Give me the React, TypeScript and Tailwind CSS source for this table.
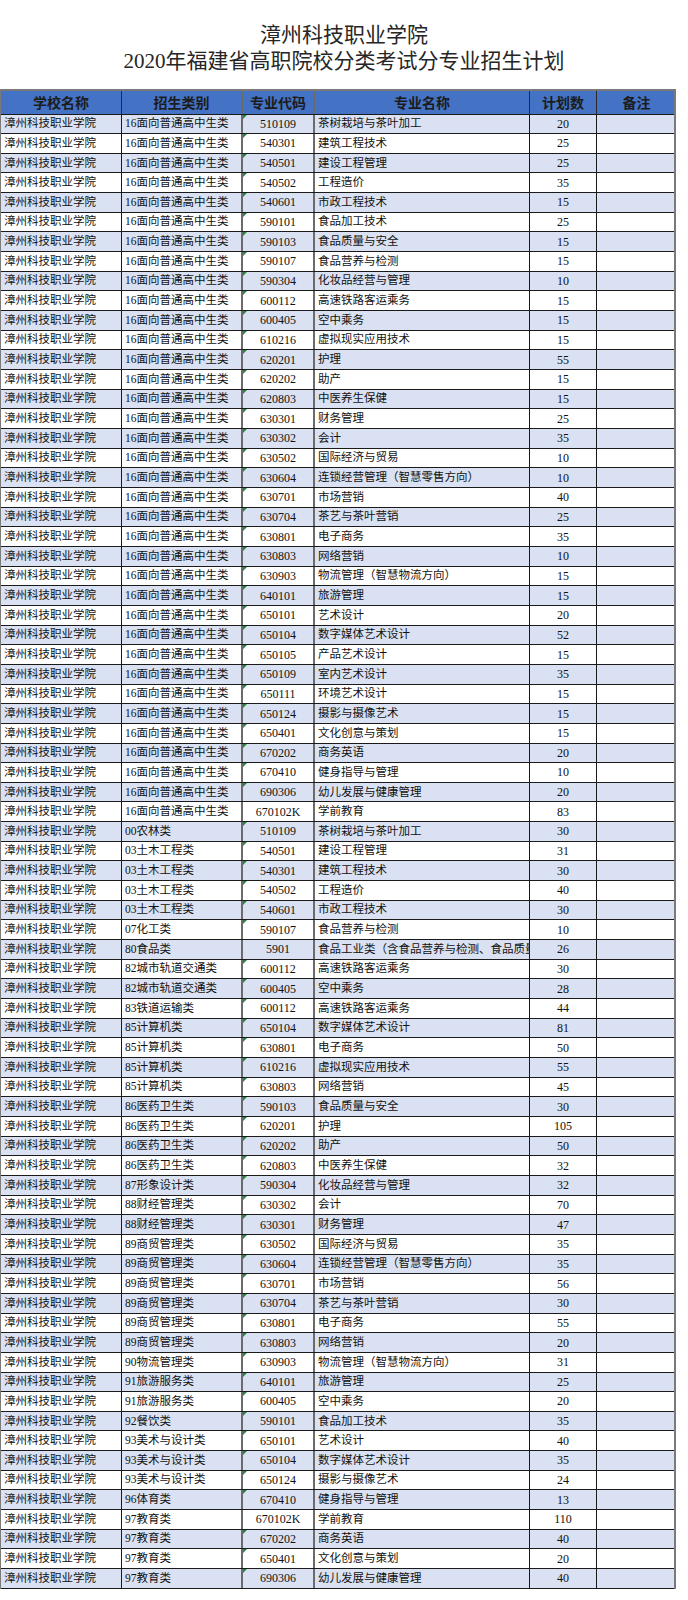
const rows: [string, string, string, number][] = [
  ["16面向普通高中生类", "510109", "茶树栽培与茶叶加工", 20],
  ["16面向普通高中生类", "540301", "建筑工程技术", 25],
  ["16面向普通高中生类", "540501", "建设工程管理", 25],
  ["16面向普通高中生类", "540502", "工程造价", 35],
  ["16面向普通高中生类", "540601", "市政工程技术", 15],
  ["16面向普通高中生类", "590101", "食品加工技术", 25],
  ["16面向普通高中生类", "590103", "食品质量与安全", 15],
  ["16面向普通高中生类", "590107", "食品营养与检测", 15],
  ["16面向普通高中生类", "590304", "化妆品经营与管理", 10],
  ["16面向普通高中生类", "600112", "高速铁路客运乘务", 15],
  ["16面向普通高中生类", "600405", "空中乘务", 15],
  ["16面向普通高中生类", "610216", "虚拟现实应用技术", 15],
  ["16面向普通高中生类", "620201", "护理", 55],
  ["16面向普通高中生类", "620202", "助产", 15],
  ["16面向普通高中生类", "620803", "中医养生保健", 15],
  ["16面向普通高中生类", "630301", "财务管理", 25],
  ["16面向普通高中生类", "630302", "会计", 35],
  ["16面向普通高中生类", "630502", "国际经济与贸易", 10],
  ["16面向普通高中生类", "630604", "连锁经营管理（智慧零售方向）", 10],
  ["16面向普通高中生类", "630701", "市场营销", 40],
  ["16面向普通高中生类", "630704", "茶艺与茶叶营销", 25],
  ["16面向普通高中生类", "630801", "电子商务", 35],
  ["16面向普通高中生类", "630803", "网络营销", 10],
  ["16面向普通高中生类", "630903", "物流管理（智慧物流方向）", 15],
  ["16面向普通高中生类", "640101", "旅游管理", 15],
  ["16面向普通高中生类", "650101", "艺术设计", 20],
  ["16面向普通高中生类", "650104", "数字媒体艺术设计", 52],
  ["16面向普通高中生类", "650105", "产品艺术设计", 15],
  ["16面向普通高中生类", "650109", "室内艺术设计", 35],
  ["16面向普通高中生类", "650111", "环境艺术设计", 15],
  ["16面向普通高中生类", "650124", "摄影与摄像艺术", 15],
  ["16面向普通高中生类", "650401", "文化创意与策划", 15],
  ["16面向普通高中生类", "670202", "商务英语", 20],
  ["16面向普通高中生类", "670410", "健身指导与管理", 10],
  ["16面向普通高中生类", "690306", "幼儿发展与健康管理", 20],
  ["16面向普通高中生类", "670102K", "学前教育", 83],
  ["00农林类", "510109", "茶树栽培与茶叶加工", 30],
  ["03土木工程类", "540501", "建设工程管理", 31],
  ["03土木工程类", "540301", "建筑工程技术", 30],
  ["03土木工程类", "540502", "工程造价", 40],
  ["03土木工程类", "540601", "市政工程技术", 30],
  ["07化工类", "590107", "食品营养与检测", 10],
  ["80食品类", "5901", "食品工业类（含食品营养与检测、食品质量与安全）", 26],
  ["82城市轨道交通类", "600112", "高速铁路客运乘务", 30],
  ["82城市轨道交通类", "600405", "空中乘务", 28],
  ["83铁道运输类", "600112", "高速铁路客运乘务", 44],
  ["85计算机类", "650104", "数字媒体艺术设计", 81],
  ["85计算机类", "630801", "电子商务", 50],
  ["85计算机类", "610216", "虚拟现实应用技术", 55],
  ["85计算机类", "630803", "网络营销", 45],
  ["86医药卫生类", "590103", "食品质量与安全", 30],
  ["86医药卫生类", "620201", "护理", 105],
  ["86医药卫生类", "620202", "助产", 50],
  ["86医药卫生类", "620803", "中医养生保健", 32],
  ["87形象设计类", "590304", "化妆品经营与管理", 32],
  ["88财经管理类", "630302", "会计", 70],
  ["88财经管理类", "630301", "财务管理", 47],
  ["89商贸管理类", "630502", "国际经济与贸易", 35],
  ["89商贸管理类", "630604", "连锁经营管理（智慧零售方向）", 35],
  ["89商贸管理类", "630701", "市场营销", 56],
  ["89商贸管理类", "630704", "茶艺与茶叶营销", 30],
  ["89商贸管理类", "630801", "电子商务", 55],
  ["89商贸管理类", "630803", "网络营销", 20],
  ["90物流管理类", "630903", "物流管理（智慧物流方向）", 31],
  ["91旅游服务类", "640101", "旅游管理", 25],
  ["91旅游服务类", "600405", "空中乘务", 20],
  ["92餐饮类", "590101", "食品加工技术", 35],
  ["93美术与设计类", "650101", "艺术设计", 40],
  ["93美术与设计类", "650104", "数字媒体艺术设计", 35],
  ["93美术与设计类", "650124", "摄影与摄像艺术", 24],
  ["96体育类", "670410", "健身指导与管理", 13],
  ["97教育类", "670102K", "学前教育", 110],
  ["97教育类", "670202", "商务英语", 40],
  ["97教育类", "650401", "文化创意与策划", 20],
  ["97教育类", "690306", "幼儿发展与健康管理", 40],
];

// green "number stored as text" marker, skipped where excel didn't flag it
const flagged = (code: string) => /^\d{6}$/.test(code);

const font = { fontFamily: "'Liberation Serif', 'Noto Sans CJK SC', serif" };
const cols = "grid grid-cols-[121px_121px_72px_215px_67px_79px]";

function Header() {
  const th = "flex items-center justify-center border-r border-[#2a2a2a] text-[14px] font-bold text-[#1c1c1c]";
  return (
    <div className={`${cols} h-[23.5px] bg-[#4472c4] border-b border-[#1a1a1a]`} style={{ fontFamily: "'Noto Sans CJK SC', sans-serif" }}>
      <div className={th}>学校名称</div>
      <div className={`${th} border-r-2 border-r-[#6b6b6b]`}>招生类别</div>
      <div className={`${th} border-r-2 border-r-[#6b6b6b]`}>专业代码</div>
      <div className={th}>专业名称</div>
      <div className={th}>计划数</div>
      <div className={`${th} border-r-0`}>备注</div>
    </div>
  );
}

export default function App() {
  return (
    <div className="min-h-[1600px] w-[688px] bg-white" style={font}>
      <div className="pt-[22px] text-center text-[21px] leading-[26px] text-[#262626]">
        <div>漳州科技职业学院</div>
        <div>2020年福建省高职院校分类考试分专业招生计划</div>
      </div>

      <div className="mt-[15px] w-[676px] border-t-2 border-l border-r-2 border-[#7a7a7a]">
        <Header />
        {rows.map(([cat, code, name, n], i) => (
          <div
            key={i}
            className={`${cols} h-[19.67px] border-b border-[#1a1a1a] text-[11.5px] text-[#111] ${i % 2 === 0 ? "bg-[#d9e1f2]" : "bg-white"}`}
          >
            <div className="flex items-center overflow-hidden whitespace-nowrap border-r border-[#1a1a1a] pl-[3px]">漳州科技职业学院</div>
            <div className="flex items-center overflow-hidden whitespace-nowrap border-r-2 border-[#6b6b6b] pl-[3px]">{cat}</div>
            <div className="relative flex items-center justify-center border-r-2 border-[#6b6b6b] text-[12px]">
              {flagged(code) && (
                <span className="absolute left-0 top-0 h-0 w-0 border-t-[4px] border-r-[4px] border-t-[#1f8a3b] border-r-transparent" />
              )}
              {code}
            </div>
            <div className="flex items-center overflow-hidden whitespace-nowrap border-r border-[#1a1a1a] pl-[3px]">{name}</div>
            <div className="flex items-center justify-center border-r border-[#1a1a1a] text-[12px]">{n}</div>
            <div />
          </div>
        ))}
      </div>
    </div>
  );
}
